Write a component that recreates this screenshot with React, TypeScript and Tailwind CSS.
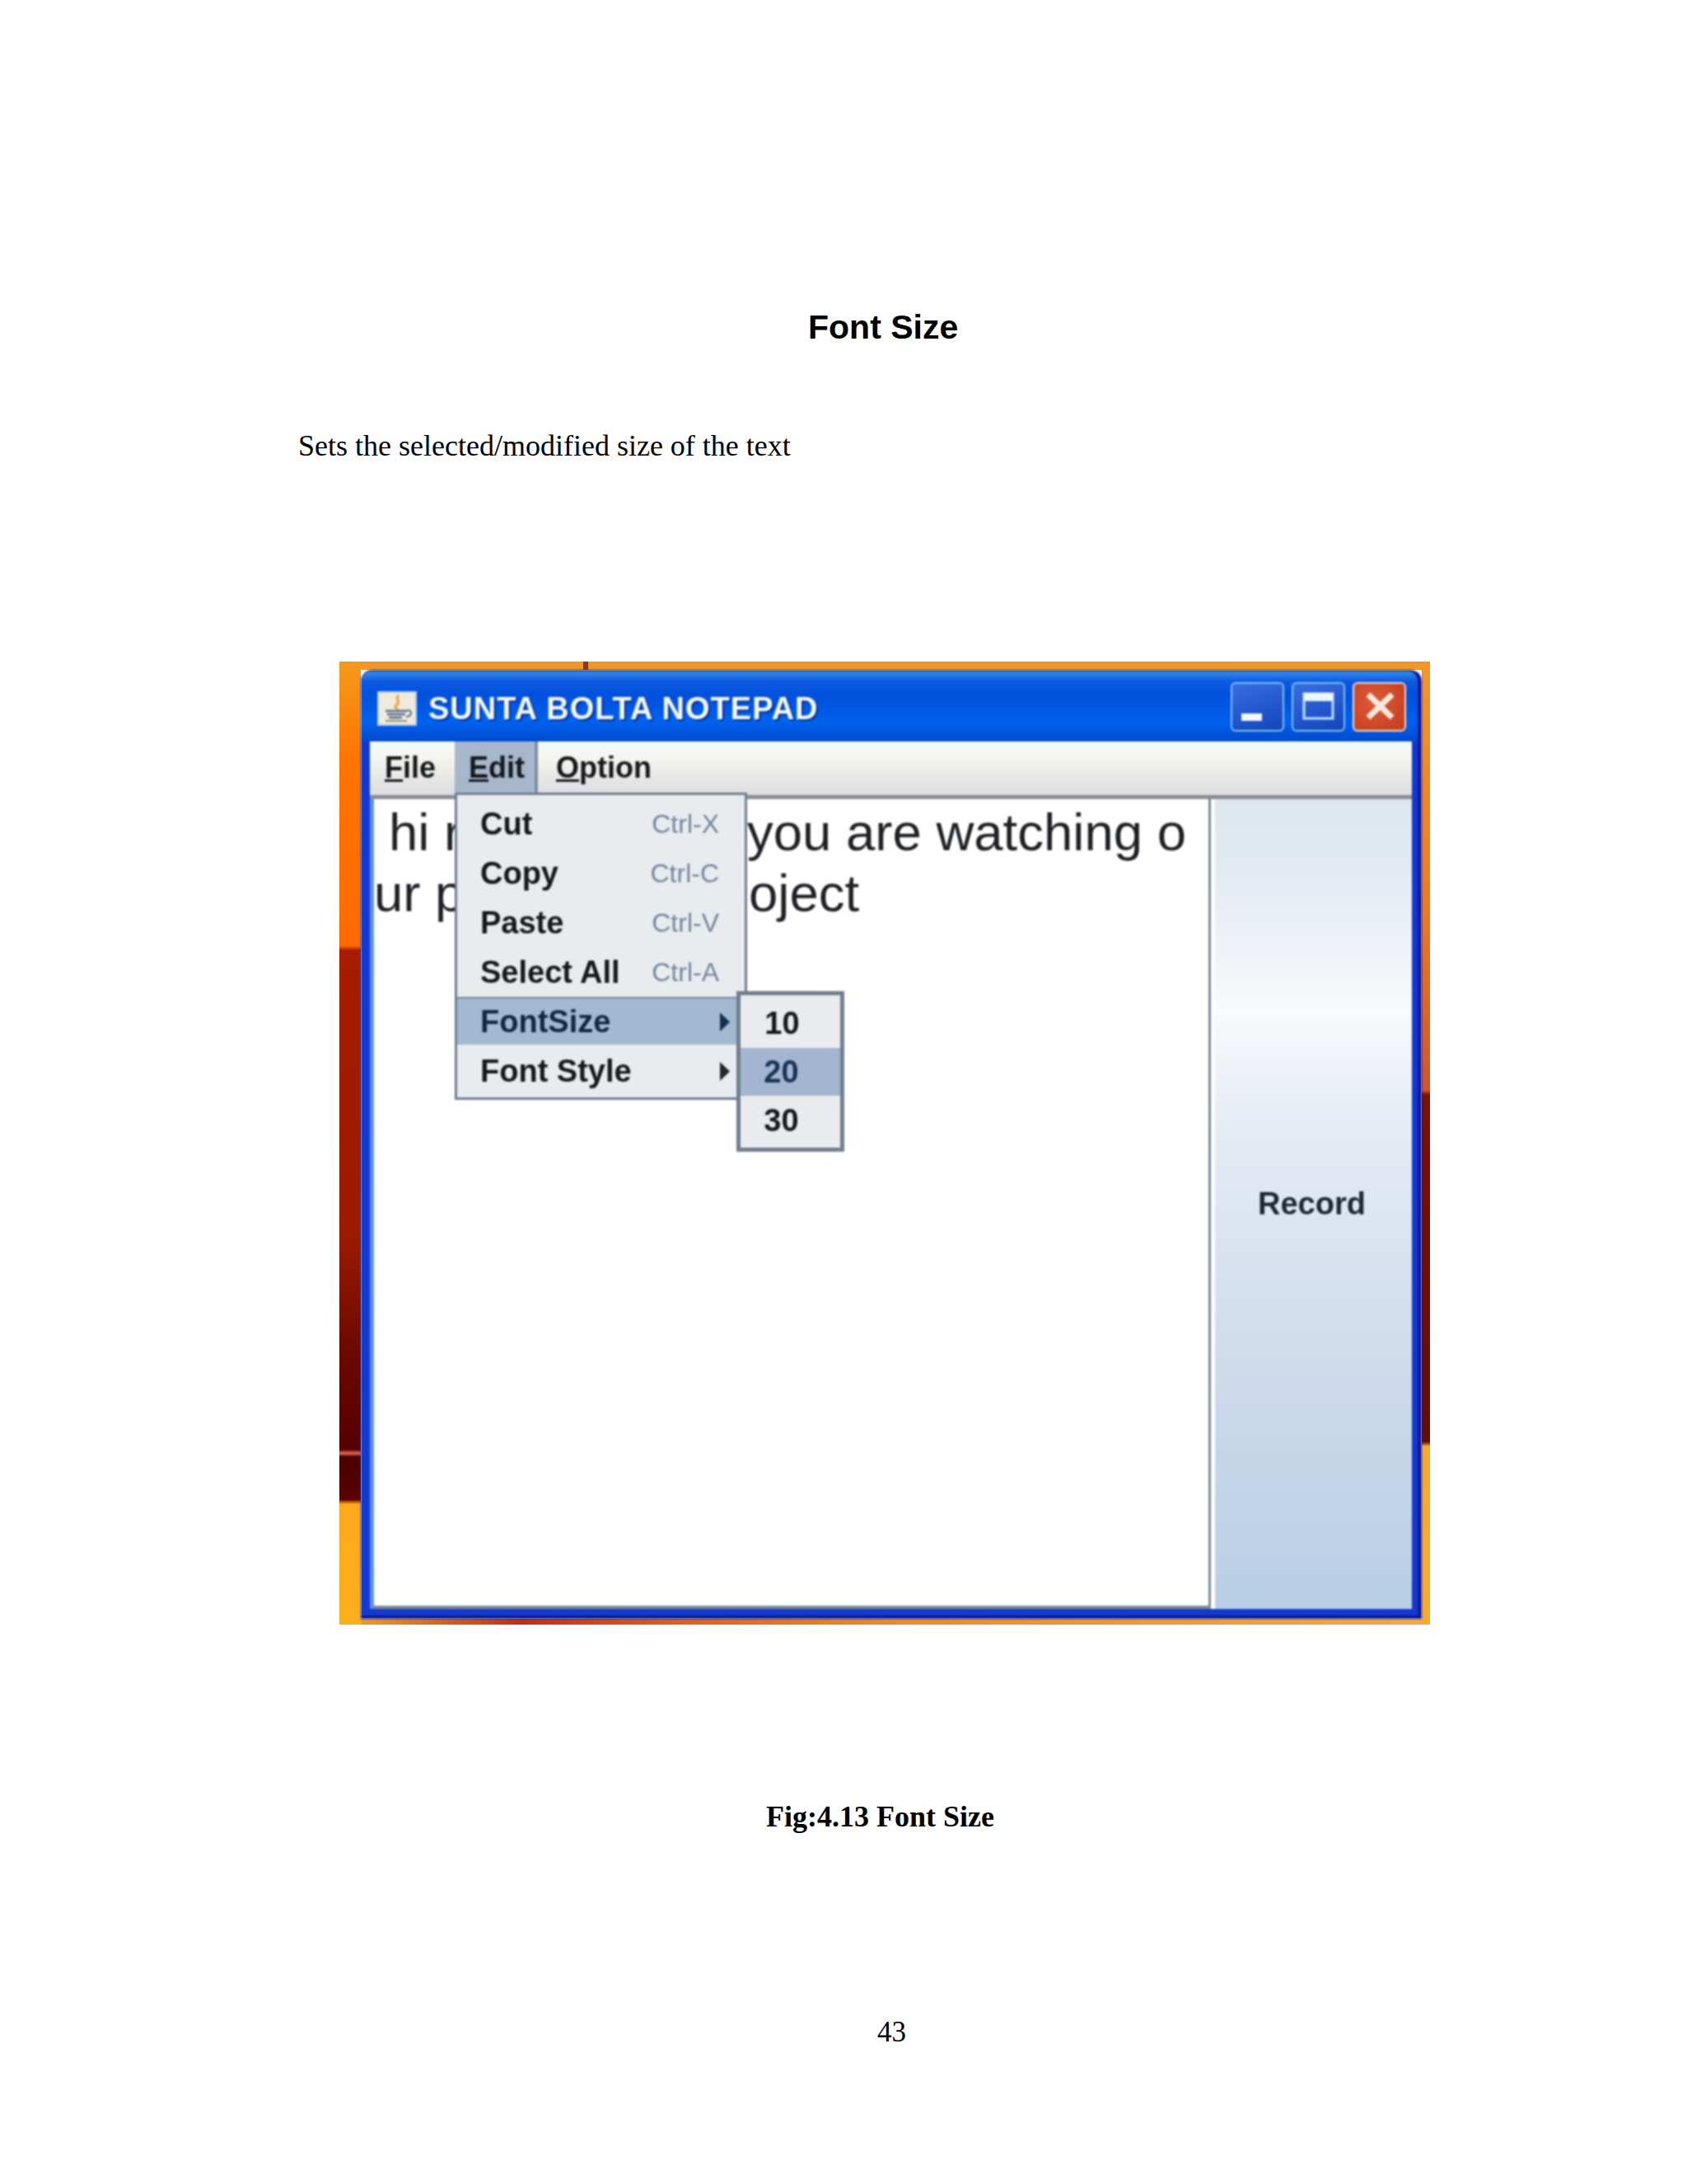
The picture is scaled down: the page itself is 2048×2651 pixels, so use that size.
const editItems = [
    { label: 'Cut', shortcut: 'Ctrl-X' },
    { label: 'Copy', shortcut: 'Ctrl-C' },
    { label: 'Paste', shortcut: 'Ctrl-V' },
    { label: 'Select All', shortcut: 'Ctrl-A' },
];

const Arrow = ({ className }: { className: string }) => (
    <svg width="13" height="23" viewBox="0 0 13 23" className={className}>
        <path d="M1 0 L13 11.5 L1 23 Z" fill="currentColor" />
    </svg>
);

const JavaIcon = () => (
    <svg width="48" height="42" viewBox="0 0 48 42" className="shrink-0 mt-[5px]">
        <rect width="48" height="42" fill="#eef0ea" />
        <rect x="1" y="1" width="46" height="40" fill="#efeadb" stroke="#b4cdf0" strokeWidth="2" />
        <path d="M26 5 C20 10 30 12 23 17 C19 20 26 21 24 23" fill="none" stroke="#e8a23a" strokeWidth="3" />
        <path d="M10 24 H36 M12 28 H34 M14 32 H30" stroke="#55708e" strokeWidth="2.5" />
        <path d="M36 23 C43 23 43 30 35 31" fill="none" stroke="#55708e" strokeWidth="2" />
        <path d="M10 36 H36" stroke="#9a8f74" strokeWidth="2" />
    </svg>
);

const CaptionButton = ({ kind }: { kind: 'min' | 'max' | 'close' }) => (
    <div
        className={`w-[65px] h-[60px] rounded-[6px] border-2 flex items-center justify-center ${kind === 'close'
            ? 'border-[#f0d8d0] bg-[radial-gradient(circle_at_40%_40%,#dc5a3c,#c23c1c)]'
            : 'border-[#7cc0f4] bg-[linear-gradient(160deg,#3a6ee0,#1e50c8_70%,#1446b8)]'
            }`}
    >
        {kind === 'min' && (
            <svg width="40" height="40" viewBox="0 0 40 40">
                <rect x="0" y="28" width="25" height="9" fill="#f4f8ff" />
            </svg>
        )}
        {kind === 'max' && (
            <svg width="40" height="40" viewBox="0 0 40 40">
                <rect x="2" y="4" width="35" height="30" fill="none" stroke="#bfe0fa" strokeWidth="3" />
                <rect x="2" y="3" width="35" height="10" fill="#eef6ff" />
            </svg>
        )}
        {kind === 'close' && (
            <svg width="40" height="40" viewBox="0 0 40 40">
                <path d="M6 5 L35 33 M35 5 L6 33" stroke="#fbeadc" strokeWidth="7" />
            </svg>
        )}
    </div>
);

const EditMenu = () => (
    <div className="absolute left-0 top-[62px] z-10 w-[355px] h-[373px] border-[3px] border-[#6f7f92] bg-[#e9ecef] pt-[5px]">
        {editItems.map((item) => (
            <div key={item.label} className="h-[60px] flex items-center justify-between pl-[28px] pr-[31px] text-[38px] font-bold text-[#15181c]">
                <span>{item.label}</span>
                <span className="text-[32px] font-normal text-[#75869e]">{item.shortcut}</span>
            </div>
        ))}
        <div className="relative h-[58px] flex items-center justify-between pl-[28px] pr-[18px] border-t-2 border-[#77899f] bg-[#a3b8d1] text-[38px] font-bold text-[#122840]">
            <span>FontSize</span>
            <Arrow className="text-[#14304c]" />
            <div className="absolute left-[339px] top-[-9px] w-[131px] h-[195px] border-[5px] border-[#717f90] bg-[#e9ebee] pt-[4px] text-center text-[38px] font-bold text-[#15181c]">
                <div className="h-[60px] flex items-center justify-center pr-[20px]">10</div>
                <div className="h-[58px] flex items-center justify-center pr-[22px] bg-[#a3b5d0] text-[#173456]">20</div>
                <div className="h-[60px] flex items-center justify-center pr-[22px]">30</div>
            </div>
        </div>
        <div className="h-[64px] flex items-center justify-between pl-[28px] pr-[18px] text-[38px] font-bold text-[#15181c]">
            <span>Font Style</span>
            <Arrow className="text-[#22272c]" />
        </div>
    </div>
);

const App = () => {
    return (
        <div className="w-[2048px] h-[2651px] bg-white overflow-hidden flex flex-col font-['Liberation_Sans',sans-serif]">
            <h1 className="ml-[981px] mt-[374px] text-[41px] leading-[46px] font-bold text-black">Font Size</h1>
            <p className="ml-[362px] mt-[98px] font-['Liberation_Serif',serif] text-[36px] leading-[46px] text-black">
                Sets the selected/modified size of the text
            </p>

            {/* Screenshot of the notepad on its wallpaper */}
            <div className="ml-[412px] mt-[239px] w-[1324px] h-[1169px] flex">
                <div className="w-[26px] bg-[linear-gradient(to_bottom,#f59a1e_0,#ff7400_10%,#ff6a00_29.5%,#a81c00_30%,#9a1a00_60%,#6a0800_72%,#560000_81.8%,#e06050_82.2%,#4a0000_82.6%,#5a0000_87%,#ffa91c_87.5%,#ffae1c_100%)]" />
                <div className="w-[1288px] flex flex-col">
                    <div className="relative h-[10px] bg-[#f0962c]">
                        <div className="absolute left-[270px] top-0 h-full w-[6px] bg-[#8a3a1c]" />
                    </div>
                    <div className="h-[1152px] blur-[1px] rounded-t-[14px] bg-[#1238d0] border-t-2 border-[#2c3f5e] border-r-[5px] border-r-[#10189a] border-b-[4px] border-b-[#0b1c90] flex flex-col">
                        {/* Title bar */}
                        <div className="h-[85px] shrink-0 rounded-t-[12px] pl-[20px] pr-[14px] flex items-center bg-[linear-gradient(to_bottom,#3a8cf2_0,#0c5ae0_14%,#0050dc_35%,#0062ee_72%,#0049cc_100%)]">
                            <JavaIcon />
                            <span className="ml-[14px] mt-[5px] text-[38px] tracking-[1px] font-bold text-[#f2f8ff] [text-shadow:2px_2px_1px_#0a2f8c]">SUNTA BOLTA NOTEPAD</span>
                            <div className="ml-auto flex gap-[9px]">
                                <CaptionButton kind="min" />
                                <CaptionButton kind="max" />
                                <CaptionButton kind="close" />
                            </div>
                        </div>

                        <div className="ml-[11px] mr-[7px] flex flex-col border-l-[5px] border-[#5f90e6]">
                            {/* Menu bar */}
                            <div className="-ml-[5px] h-[70px] shrink-0 flex items-stretch border-b-[5px] border-[#8b8e92] bg-[linear-gradient(to_bottom,#f0fbff_0,#f6f6ee_30%,#e6e6e6_70%,#dddee2_100%)] text-[36px] font-bold text-[#15181c]">
                                <div className="w-[103px] pl-[18px] pb-[2px] flex items-center"><span><u>F</u>ile</span></div>
                                <div className="relative w-[101px] pl-[17px] pb-[2px] flex items-center bg-[#a6b6cb] border-r-[4px] border-[#7e8ea3]">
                                    <span><u>E</u>dit</span>
                                    <EditMenu />
                                </div>
                                <div className="pl-[22px] pb-[2px] flex items-center"><span><u>O</u>ption</span></div>
                            </div>

                            {/* Text area and record button */}
                            <div className="h-[983px] flex">
                                <div className="flex-1 bg-white border-r-[3px] border-b-[4px] border-[#7d8a90] pt-[3px] text-[63.5px] leading-[74px] text-[#1d2024]">
                                    <div className="flex">
                                        <span className="w-[453px] pl-[18px] whitespace-nowrap overflow-hidden">hi r</span>
                                        <span className="whitespace-nowrap">you are watching o</span>
                                    </div>
                                    <div className="flex">
                                        <span className="w-[455px] whitespace-nowrap overflow-hidden">ur p</span>
                                        <span className="whitespace-nowrap">oject</span>
                                    </div>
                                </div>
                                <div className="w-[5px] bg-white" />
                                <div className="w-[239px] pr-[4px] flex items-center justify-center bg-[linear-gradient(to_bottom,#dde6ee_0,#e4ebf2_10%,#f8fafc_26%,#e6ecf5_40%,#cbd9ea_74%,#b8cfe6_100%)] text-[38px] font-bold text-[#1e2834]">
                                    Record
                                </div>
                            </div>
                        </div>
                    </div>
                    <div className="h-[7px] bg-[linear-gradient(to_right,#f09a20,#c03010_15%,#e0601c_30%,#f08a20_50%,#f8a838_100%)]" />
                </div>
                <div className="w-[10px] bg-[linear-gradient(to_bottom,#f0962c_0,#f07a1c_25%,#d0552a_44.5%,#7a1000_45%,#620c08_81%,#f9a830_81.5%,#f9a830_100%)]" />
            </div>

            <p className="ml-[930px] mt-[210px] font-['Liberation_Serif',serif] text-[36px] leading-[46px] font-bold text-black">Fig:4.13 Font Size</p>
            <p className="ml-[1065px] mt-[216px] font-['Liberation_Serif',serif] text-[35px] leading-[46px] text-black">43</p>
        </div>
    );
};

export default App;
